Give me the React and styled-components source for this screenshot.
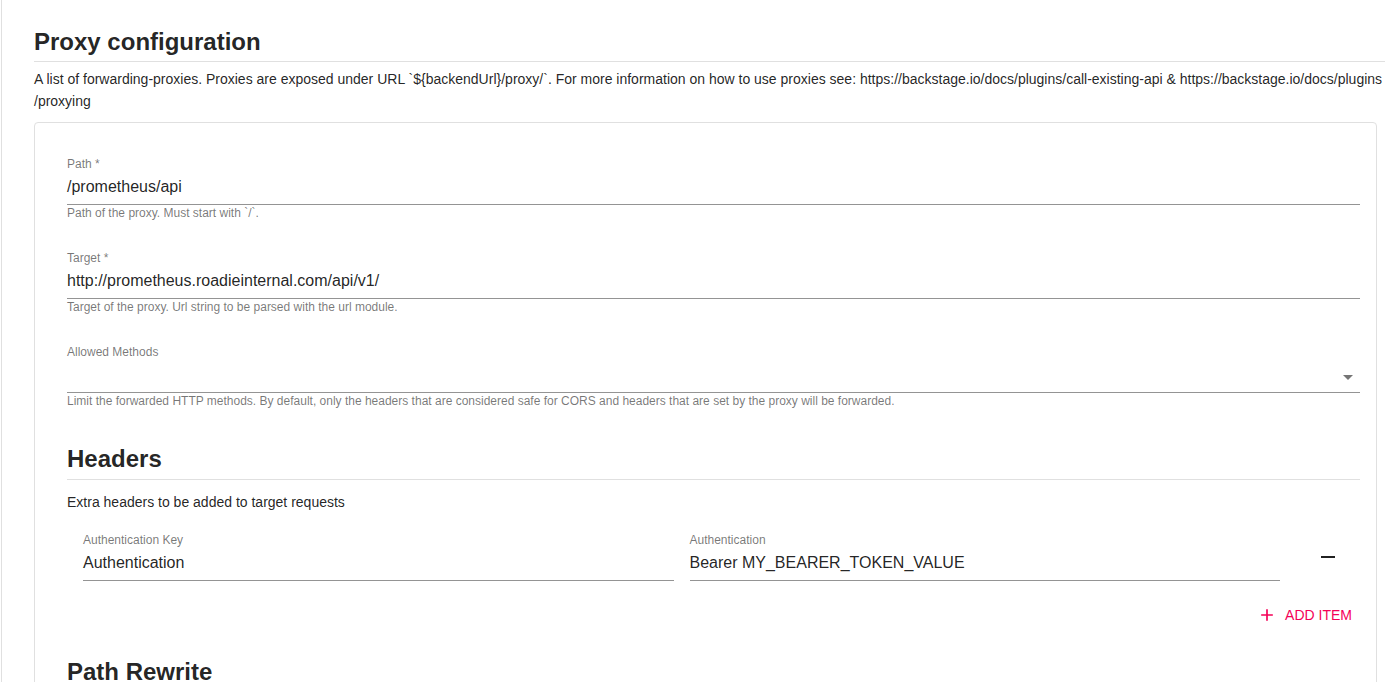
import styled, { createGlobalStyle } from "styled-components"

const GlobalStyle = createGlobalStyle`
  html, body {
    margin: 0;
    background: #fff;
    overflow: hidden;
  }
  body {
    font-family: "Liberation Sans", Arial, sans-serif;
    color: rgba(0, 0, 0, 0.87);
  }
  * {
    box-sizing: border-box;
  }
`

const Page = styled.div`
  width: 1400px;
  min-height: 682px;
  margin-left: 1px;
  border-left: 1px solid #e0e0e0;
  padding: 26px 0 0 32px;
`

const Title = styled.h5`
  margin: ${({ $top }) => $top || 0}px 0 0;
  font-size: 24px;
  line-height: 32px;
  font-weight: 700;
  color: rgba(0, 0, 0, 0.87);
`

const Divider = styled.hr`
  margin: ${({ $top }) => $top}px 0 0;
  height: 1px;
  border: none;
  background: #e0e0e0;
`

const Description = styled.p`
  margin: ${({ $top }) => $top}px 0 0;
  font-size: 14px;
  line-height: 22px;
`

const Card = styled.div`
  margin: 10px 24px 0 0;
  border: 1px solid #e0e0e0;
  border-radius: 4px;
  padding: 33px 16px 40px 32px;
`

const FieldWrap = styled.div`
  display: flex;
  flex-direction: column;
  flex: ${({ $grow }) => ($grow ? 1 : "none")};
  min-width: 0;
  margin-bottom: ${({ $last }) => ($last ? 0 : 30)}px;
`

const Label = styled.label`
  padding-top: 1px;
  font-size: 12px;
  line-height: 14px;
  color: rgba(0, 0, 0, 0.54);
`

const InputRow = styled.div`
  display: flex;
  align-items: flex-start;
  padding: 6px 0 8px;
  border-bottom: 1px solid rgba(0, 0, 0, 0.42);
  font-size: 16px;
  line-height: 19px;
  min-height: 34px;
  color: rgba(0, 0, 0, 0.87);

  svg {
    margin: 0 0 -5px auto;
    flex: none;
  }
`

const Helper = styled.span`
  margin-top: 1px;
  font-size: 12px;
  line-height: 14px;
  color: rgba(0, 0, 0, 0.54);
`

const ItemRow = styled.div`
  display: flex;
  align-items: center;
  gap: 16px;
  margin-top: 19px;
  padding-left: 16px;
`

const Actions = styled.div`
  width: 80px;
  margin-left: -16px;
  display: flex;
  justify-content: flex-end;
  padding-right: 8px;
`

const IconButton = styled.button`
  width: 48px;
  height: 48px;
  padding: 12px;
  border: none;
  background: transparent;
  border-radius: 50%;
  color: rgba(0, 0, 0, 0.87);
  display: flex;
  align-items: center;
  justify-content: center;
  cursor: pointer;
`

const ButtonBar = styled.div`
  display: flex;
  justify-content: flex-end;
  margin-top: 16px;
`

const TextButton = styled.button`
  display: inline-flex;
  align-items: center;
  height: 36px;
  padding: 6px 8px;
  border: none;
  background: transparent;
  color: #f50057;
  font-family: "Liberation Sans", Arial, sans-serif;
  font-size: 14px;
  font-weight: 500;
  text-transform: uppercase;
  cursor: pointer;

  svg {
    margin: 0 8px 0 -4px;
  }
`

const ArrowDown = () => (
  <svg width="24" height="24" viewBox="0 0 24 24" fill="rgba(0,0,0,0.54)">
    <path d="M7 10l5 5 5-5z" />
  </svg>
)

const Field = ({ label, value, helper, select, grow, last }) => (
  <FieldWrap $grow={grow} $last={last}>
    <Label>{label}</Label>
    <InputRow>
      {value}
      {select && <ArrowDown />}
    </InputRow>
    {helper && <Helper>{helper}</Helper>}
  </FieldWrap>
)

const App = () => (
  <>
    <GlobalStyle />
    <Page>
      <Title>Proxy configuration</Title>
      <Divider $top={3} />
      <Description $top={6}>
        A list of forwarding-proxies. Proxies are exposed under URL `${"{"}backendUrl{"}"}/proxy/`. For more
        information on how to use proxies see: https://backstage.io/docs/plugins/call-existing-api &amp;
        https://backstage.io/docs/plugins<wbr />/proxying
      </Description>
      <Card>
        <Field label="Path *" value="/prometheus/api" helper="Path of the proxy. Must start with `/`." />
        <Field
          label="Target *"
          value="http://prometheus.roadieinternal.com/api/v1/"
          helper="Target of the proxy. Url string to be parsed with the url module."
        />
        <Field
          label="Allowed Methods"
          select
          last
          helper="Limit the forwarded HTTP methods. By default, only the headers that are considered safe for CORS and headers that are set by the proxy will be forwarded."
        />

        <Title $top={35}>Headers</Title>
        <Divider $top={4} />
        <Description $top={11}>Extra headers to be added to target requests</Description>
        <ItemRow>
          <Field label="Authentication Key" value="Authentication" grow last />
          <Field label="Authentication" value="Bearer MY_BEARER_TOKEN_VALUE" grow last />
          <Actions>
            <IconButton aria-label="remove">
              <svg width="24" height="24" viewBox="0 0 24 24" fill="currentColor">
                <path d="M19 13H5v-2h14v2z" />
              </svg>
            </IconButton>
          </Actions>
        </ItemRow>
        <ButtonBar>
          <TextButton>
            <svg width="20" height="20" viewBox="0 0 24 24" fill="currentColor">
              <path d="M19 13h-6v6h-2v-6H5v-2h6V5h2v6h6v2z" />
            </svg>
            Add Item
          </TextButton>
        </ButtonBar>

        <Title $top={23}>Path Rewrite</Title>
      </Card>
    </Page>
  </>
)

export default App
